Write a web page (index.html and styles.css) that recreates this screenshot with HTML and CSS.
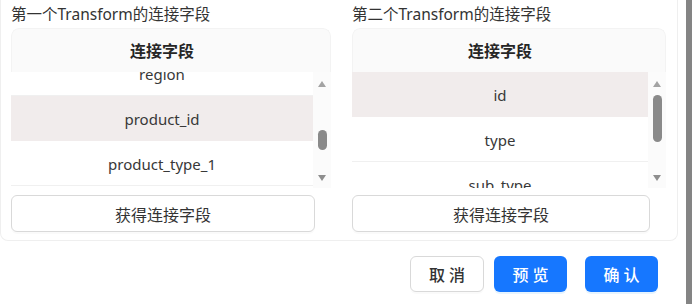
FILE: index.html
```html
<!DOCTYPE html>
<html lang="zh">
<head>
  <meta charset="UTF-8" />
  <title>连接字段</title>
  <link rel="stylesheet" href="styles.css">
</head>
<body>
  <div class="page">
    <div class="main">
      <div class="card">
        <!-- 第一个 -->
        <div class="panel panel-left">
          <div class="panel-title">第一个Transform的连接字段</div>
          <div class="table">
            <div class="thead">
              <div class="th">连接字段</div>
              <div class="th-scroll"></div>
            </div>
            <div class="tbody">
              <div class="rows scrolled">
                <div class="row">region</div>
                <div class="row selected">product_id</div>
                <div class="row">product_type_1</div>
              </div>
              <div class="track">
                <span class="arrow up"></span>
                <span class="thumb thumb-left"></span>
                <span class="arrow down"></span>
              </div>
            </div>
          </div>
          <button class="fetch-btn">获得连接字段</button>
        </div>

        <!-- 第二个 -->
        <div class="panel panel-right">
          <div class="panel-title">第二个Transform的连接字段</div>
          <div class="table">
            <div class="thead">
              <div class="th">连接字段</div>
              <div class="th-scroll"></div>
            </div>
            <div class="tbody">
              <div class="rows">
                <div class="row selected">id</div>
                <div class="row">type</div>
                <div class="row">sub_type</div>
              </div>
              <div class="track">
                <span class="arrow up"></span>
                <span class="thumb thumb-right"></span>
                <span class="arrow down"></span>
              </div>
            </div>
          </div>
          <button class="fetch-btn">获得连接字段</button>
        </div>
      </div>

      <div class="footer">
        <button class="btn btn-default">取 消</button>
        <button class="btn btn-primary btn-preview">预 览</button>
        <button class="btn btn-primary btn-ok">确 认</button>
      </div>
    </div>
    <div class="edge"></div>
  </div>
</body>
</html>
```

FILE: styles.css
```css
body {
  margin: 0;
  background: #fff;
  font-family: "Noto Sans", "Noto Sans CJK SC", sans-serif;
  color: #333;
}

.page {
  display: flex;
  height: 304px;
  overflow: hidden;
}

.main {
  width: 686px;
}

.edge {
  width: 6px;
  background-color: #848484;
}

.card {
  width: 656px;
  display: grid;
  grid-template-columns: 320px 314px;
  column-gap: 21px;
  padding: 0 10px 8px 10px;
  border: 1px solid #efefef;
  border-top: none;
  border-radius: 0 0 8px 8px;
}

.panel-title {
  height: 28px;
  line-height: 28px;
  box-sizing: border-box;
  font-size: 15.5px;
  color: #333;
  white-space: nowrap;
}

.table {
  border-radius: 8px 8px 0 0;
  overflow: hidden;
}

.thead {
  display: flex;
  height: 44px;
  background-color: #fafafa;
  border: 1px solid #f3f3f3;
  border-bottom: none;
  border-radius: 8px 8px 0 0;
  box-sizing: border-box;
}

.th {
  flex: 1;
  text-align: center;
  line-height: 45px;
  font-size: 16px;
  font-weight: bold;
  color: #262626;
}

.th-scroll {
  width: 18px;
}

.tbody {
  display: flex;
  height: 116px;
}

.rows {
  flex: 1;
  overflow: hidden;
}

.scrolled .row:first-child {
  margin-top: -21px;
}

.row {
  height: 45px;
  line-height: 47px;
  box-sizing: border-box;
  border-bottom: 1px solid #f0f0f0;
  text-align: center;
  font-size: 15px;
  color: #383838;
  background: #fff;
}

.row.selected {
  background-color: #f1ecec;
  border-bottom-color: #f1ecec;
}

.track {
  width: 18px;
  display: flex;
  flex-direction: column;
  align-items: center;
  padding: 9px 0 7px;
  box-sizing: border-box;
  background-color: #fbfbfb;
}

.arrow {
  width: 0;
  height: 0;
  border-left: 4px solid transparent;
  border-right: 4px solid transparent;
}

.arrow.up {
  border-bottom: 6px solid #a3a3a3;
}

.arrow.down {
  border-top: 6px solid #8e8e8e;
  margin-top: auto;
}

.thumb {
  width: 9px;
  border-radius: 5px;
  background-color: #8a8a8a;
}

.thumb-left {
  height: 20px;
  margin-top: 43px;
}

.thumb-right {
  height: 47px;
  margin-top: 8px;
}

.fetch-btn {
  display: block;
  margin-top: 7px;
  height: 37px;
  background: #fff;
  border: 1px solid #d9d9d9;
  border-radius: 6px;
  font-family: inherit;
  font-size: 16px;
  color: #333;
  box-shadow: 0 2px 0 rgba(0, 0, 0, 0.02);
}

.panel-left .fetch-btn {
  width: 304px;
}

.panel-right .fetch-btn {
  width: 298px;
}

.footer {
  display: flex;
  justify-content: flex-end;
  padding-right: 28px;
  margin-top: 15px;
}

.btn {
  height: 36px;
  width: 74px;
  border-radius: 6px;
  font-family: inherit;
  font-size: 16px;
  font-weight: 500;
  cursor: pointer;
}

.btn-default {
  background: #fff;
  color: #333;
  border: 1px solid #d9d9d9;
  box-shadow: 0 2px 0 rgba(0, 0, 0, 0.02);
}

.btn-primary {
  width: 73px;
  background-color: #1677ff;
  color: #fff;
  border: none;
  box-shadow: 0 2px 0 rgba(5, 145, 255, 0.1);
}

.btn-preview {
  margin-left: 10px;
}

.btn-ok {
  margin-left: 18px;
}
```
